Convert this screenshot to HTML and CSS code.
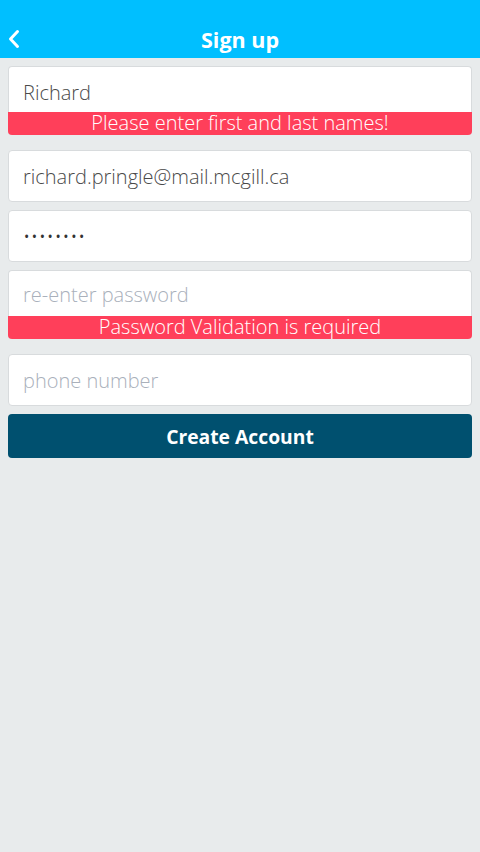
FILE: index.html
```html
<!DOCTYPE html>
<html lang="en">
<head>
<meta charset="utf-8">
<title>Sign up</title>
<link rel="stylesheet" href="styles.css">
</head>
<body>
<header class="bar">
  <button class="back" aria-label="Back">
    <svg width="14" height="20" viewBox="0 0 14 20"><polyline points="10.5,2.5 3.5,10 10.5,17.5" fill="none" stroke="#fff" stroke-width="3" stroke-linecap="round" stroke-linejoin="round"/></svg>
  </button>
  <h1 class="title">Sign up</h1>
</header>
<main class="form">
  <div class="field has-error">
    <input class="input" type="text" value="Richard" placeholder="first and last name">
    <div class="error">Please enter first and last names!</div>
  </div>
  <div class="field">
    <input class="input" type="email" value="richard.pringle@mail.mcgill.ca" placeholder="email">
  </div>
  <div class="field">
    <input class="input" type="password" value="12345678" placeholder="password">
  </div>
  <div class="field has-error">
    <input class="input" type="password" placeholder="re-enter password">
    <div class="error">Password Validation is required</div>
  </div>
  <div class="field">
    <input class="input" type="tel" placeholder="phone number">
  </div>
  <button class="submit">Create Account</button>
</main>
</body>
</html>
```
FILE: styles.css
```css
* { box-sizing: border-box; }
html, body { margin: 0; padding: 0; }
body {
  background: #e8ebec;
  font-family: "Open Sans", "Noto Sans", sans-serif;
  width: 480px;
  min-height: 852px;
}
.bar {
  height: 58px;
  background: #00bfff;
  position: relative;
  display: flex;
  align-items: flex-end;
  justify-content: center;
  padding-bottom: 4px;
}
.back {
  position: absolute;
  left: 7px;
  top: 29px;
  padding: 0;
  border: 0;
  background: none;
  width: 14px;
  height: 20px;
  display: block;
}
.back svg { display: block; }
.title {
  margin: 0;
  color: #fff;
  font-size: 21.5px;
  font-weight: 700;
  line-height: 28px;
}
.form {
  padding: 8px 8px;
  display: flex;
  flex-direction: column;
  gap: 8px;
}
.field {
  background: #fff;
  border: 1px solid #d8dbdd;
  border-radius: 4px;
  display: flex;
  flex-direction: column;
}
.field.has-error { margin-bottom: 7px; border-bottom: 0; }
.input {
  height: 50px;
  border: 0;
  outline: none;
  background: transparent;
  padding: 0 14px;
  font-family: "Open Sans", "Noto Sans", sans-serif;
  font-size: 20px;
  font-weight: 300;
  color: #4a4a4a;
}
.has-error .input { height: 45px; padding-top: 5px; }
.input::placeholder { color: #a9b0bb; opacity: 1; }
.input[type="password"] { letter-spacing: 2.6px; font-size: 14px; font-weight: 400; color: #333; padding-left: 15px; }
.input[type="password"]::placeholder { letter-spacing: 0; font-size: 20px; font-weight: 300; }
.has-error .input[type="password"] { padding-left: 14px; }
.error {
  height: 23px;
  margin: 0 -1px;
  background: #ff3f5a;
  border-radius: 0 0 4px 4px;
  color: #fff;
  font-size: 20px;
  font-weight: 300;
  line-height: 22px;
  text-align: center;
}
.submit {
  height: 44px;
  border: 0;
  border-radius: 4px;
  background: #00506f;
  color: #fff;
  font-family: "Open Sans", "Noto Sans", sans-serif;
  font-size: 19.3px;
  font-weight: 700;
  padding: 0;
}
```
